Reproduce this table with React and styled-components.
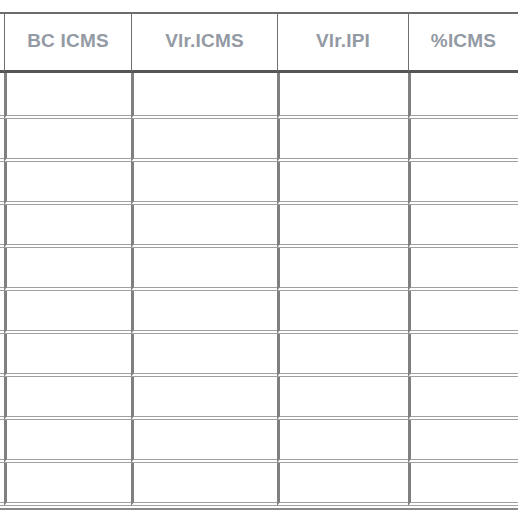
import React from 'react';
import styled, { createGlobalStyle } from 'styled-components';

const Global = createGlobalStyle`
  html, body {
    margin: 0;
    background: #fff;
  }
`;

const Page = styled.div`
  padding-top: 12px;
  width: 518px;
`;

const Frame = styled.div`
  border-bottom: 2px solid #8a8a8a;
  padding-bottom: 2px;
`;

const Grid = styled.table`
  width: 518px;
  table-layout: fixed;
  border-collapse: separate;
  border-spacing: 0;
  font-family: "Liberation Sans", Arial, sans-serif;
`;

const Head = styled.th`
  box-sizing: border-box;
  height: 61px;
  padding: 0 0 2px;
  border-top: 2px solid #6c6c6c;
  border-bottom: 3px solid #555;
  border-left: ${(p) => (p.$stub ? '0' : '1px solid #6f6f6f')};
  color: #939aa4;
  font-size: 19px;
  font-weight: 700;
  letter-spacing: 0.2px;
  text-align: center;
  vertical-align: middle;
`;

const Cell = styled.td`
  box-sizing: border-box;
  height: 43px;
  padding: 0;
  border-left: ${(p) => (p.$stub ? '0' : '3px solid #808080')};
  border-bottom: 4px double #a0a0a0;

  tr:first-child > & {
    height: 46px;
  }
`;

const cols = [4, 127, 146, 131, 110];
const heads = ['', 'BC ICMS', 'Vlr.ICMS', 'Vlr.IPI', '%ICMS'];
const rows = Array.from({ length: 10 }, (_, i) => i);

export default function App() {
  return (
    <Page>
      <Global />
      <Frame>
        <Grid>
          <colgroup>
            {cols.map((w, i) => (
              <col key={i} style={{ width: w }} />
            ))}
          </colgroup>
          <thead>
            <tr>
              {heads.map((h, i) => (
                <Head key={i} $stub={i === 0}>{h}</Head>
              ))}
            </tr>
          </thead>
          <tbody>
            {rows.map((r) => (
              <tr key={r}>
                {cols.map((_, i) => (
                  <Cell key={i} $stub={i === 0} />
                ))}
              </tr>
            ))}
          </tbody>
        </Grid>
      </Frame>
    </Page>
  );
}
